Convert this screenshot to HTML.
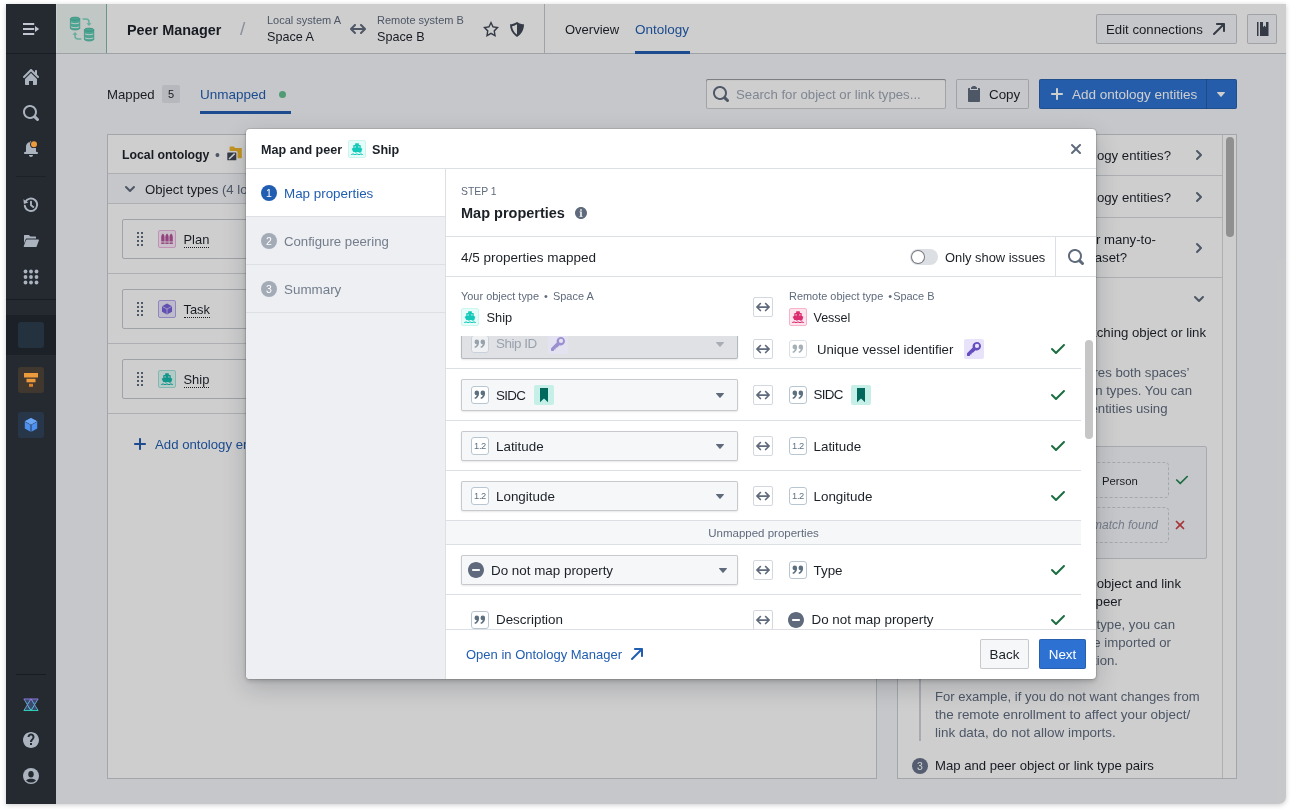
<!DOCTYPE html>
<html lang="en">
<head>
<meta charset="utf-8">
<title>Peer Manager</title>
<style>
*{box-sizing:border-box;margin:0;padding:0}
html,body{width:1293px;height:812px;background:#fff;overflow:hidden}
body{font-family:"Liberation Sans",sans-serif;font-size:13.2px;color:#1c2127;line-height:18px;position:relative}
svg{display:block}
.abs{position:absolute;white-space:nowrap}
.muted{color:#5f6b7c}
.blue{color:#215db0}
.b{font-weight:700}
#shadow{position:absolute;left:6px;top:4px;width:1280px;height:800px;border-radius:0 0 7px 0;box-shadow:0 1px 5px rgba(0,0,0,.2)}
#frame{will-change:transform;position:absolute;left:0;top:0;width:1293px;height:812px;overflow:hidden;clip-path:inset(4px 7px 8px 6px round 0 0 7px 0)}
#sidebar{position:absolute;left:6px;top:4px;width:50px;height:800px;background:#252a31}
#topbar{position:absolute;left:56px;top:4px;width:1230px;height:50px;background:#fff;border-bottom:1px solid #c5c8cc}
#content{position:absolute;left:56px;top:54px;width:1230px;height:750px;background:#f6f7f9}
#overlay{position:absolute;left:56px;top:4px;width:1230px;height:800px;background:rgba(10,12,15,.2)}
#modal{will-change:transform;position:absolute;left:246px;top:129px;width:850px;height:550px;background:#fff;border-radius:4px;box-shadow:0 0 0 1px rgba(17,20,24,.1),0 2px 4px rgba(17,20,24,.2),0 8px 24px rgba(17,20,24,.2);overflow:hidden}
.btn{position:absolute;height:30px;border:1px solid rgba(17,20,24,.2);background:#f6f7f9;border-radius:2px;white-space:nowrap}
.panel{position:absolute;background:#fff;border:1px solid #c9ccd0}
.hline{position:absolute;height:1px;background:#dcdee1}
.vline{position:absolute;width:1px;background:#dcdee1}
.tbox{position:absolute;width:18px;height:18px;border-radius:2px}

</style>
</head>
<body>
<div id="shadow"></div>
<div id="frame">
<div id="sidebar"></div>
<div id="topbar"></div>
<div id="content"></div>
<div class="abs" style="left:23px;top:21px;"><svg width="17" height="16" viewBox="0 0 17 16" style=""><g fill="#c0c6d0"><rect x="0" y="2" width="11.200" height="2"/><rect x="0" y="7" width="11.200" height="2"/><rect x="0" y="12" width="11.200" height="2"/><path d="M12 5l4.200 3-4.200 3z"/></g></svg></div>
<div class="abs" style="left:6px;top:53px;width:50px;height:1px;background:#1a1e24"></div>
<div class="abs" style="left:23.0px;top:69.0px;"><svg width="16" height="16" viewBox="0 0 16 16" style="" ><path fill="#abb3bf" fill-rule="evenodd" d="M2 10v5c0 .55.45 1 1 1h3v-4h4v4h3c.55 0 1-.45 1-1v-5L8 4l-6 6zm13.71-2.71L14 5.59V2c0-.55-.45-1-1-1s-1 .45-1 1v1.59L8.71.29C8.53.11 8.28 0 8 0s-.53.11-.71.29l-7 7a1.003 1.003 0 001.42 1.42L8 2.41l6.29 6.29a1.003 1.003 0 001.42-1.42z"/></svg></div>
<div class="abs" style="left:23.0px;top:105.0px;"><svg width="16" height="16" viewBox="0 0 16 16" style="" ><path fill="#abb3bf" fill-rule="evenodd" d="M15.55 13.43l-2.67-2.68a6.94 6.94 0 001.11-3.76c0-3.87-3.13-7-7-7s-7 3.13-7 7 3.13 7 7 7c1.39 0 2.68-.42 3.76-1.11l2.68 2.67a1.498 1.498 0 102.12-2.12zm-8.56-1.44c-2.76 0-5-2.24-5-5s2.24-5 5-5 5 2.24 5 5-2.24 5-5 5z"/></svg></div>
<div class="abs" style="left:23px;top:141px;"><svg width="16" height="16" viewBox="0 0 16 16" style=""><path fill="#abb3bf" d="M8 16c1.100 0 2-.9 2-2H6c0 1.100.9 2 2 2zm6-5c-.55 0-1-.45-1-1V6c0-2.430-1.730-4.450-4.020-4.900.010-.4.020-.7.020-.1 0-.55-.45-1-1-1s-1 .45-1 1c0 .3.010.6.020.1A4.992 4.992 0 003 6v4c0 .55-.45 1-1 1s-1 .45-1 1 .45 1 1 1h12c.55 0 1-.45 1-1s-.45-1-1-1z"/><circle cx="11" cy="3.200" r="3.900" fill="#252a31"/><circle cx="11" cy="3.200" r="3" fill="#ec9a3c"/></svg></div>
<div class="abs" style="left:16px;top:176px;width:30px;height:1px;background:#1c2127"></div>
<div class="abs" style="left:23px;top:197px;"><svg width="16" height="16" viewBox="0 0 16 16" style=""><g fill="none" stroke="#abb3bf" stroke-width="1.900" stroke-linecap="round" stroke-linejoin="round"><path d="M2.300 5.200A6.200 6.200 0 1 1 1.800 8.600"/><path d="M8 4.600V8.300l2.300 1.700"/></g><path fill="#abb3bf" d="M.4 2.300l.5 4.600 4.400-1.300z"/></svg></div>
<div class="abs" style="left:23px;top:233px;"><svg width="16" height="16" viewBox="0 0 16 16" style=""><g fill="#abb3bf"><path d="M1 2.500c0-.3.200-.5.500-.5h4.200c.15 0 .3.060.4.170L7.400 3.500h5.100c.3 0 .5.200.5.500v1.500H3.600c-.4 0-.8.250-.95.640L1 10.500z"/><path d="M3.900 6.500h11.600c.35 0 .6.350.47.680l-2.300 6.200c-.14.380-.5.620-.9.620H1.200c-.35 0-.6-.35-.47-.680l2.300-6.200c.14-.380.500-.620.870-.620z"/></g></svg></div>
<div class="abs" style="left:23px;top:269px;"><svg width="16" height="16" viewBox="0 0 16 16" style=""><g fill="#abb3bf"><circle cx="2.5" cy="2.5" r="1.900"/><circle cx="2.5" cy="8.0" r="1.900"/><circle cx="2.5" cy="13.5" r="1.900"/><circle cx="8.0" cy="2.5" r="1.900"/><circle cx="8.0" cy="8.0" r="1.900"/><circle cx="8.0" cy="13.5" r="1.900"/><circle cx="13.5" cy="2.5" r="1.900"/><circle cx="13.5" cy="8.0" r="1.900"/><circle cx="13.5" cy="13.5" r="1.900"/></g></svg></div>
<div class="abs" style="left:6px;top:299px;width:50px;height:1px;background:#1a1e24"></div>
<div class="abs" style="left:6px;top:315px;width:50px;height:40px;background:#1c2127"></div>
<div class="abs" style="left:18px;top:322px;width:26px;height:26px;border-radius:3px;background:#24313f"></div>
<div class="abs" style="left:18px;top:367px;width:26px;height:26px;border-radius:3px;background:#40382f"><svg width="26" height="26" viewBox="0 0 26 26" style=""><rect x="6" y="6" width="14" height="4.500" fill="#ec9a3c"/><rect x="8.500" y="11.800" width="9" height="3.500" fill="#ec9a3c"/><rect x="11" y="16.800" width="4" height="3" fill="#d9822b"/></svg></div>
<div class="abs" style="left:18px;top:412px;width:26px;height:26px;border-radius:3px;background:#28364a"><svg width="26" height="26" viewBox="0 0 26 26" style=""><path d="M13 6l6.200 3.300v7.200L13 20l-6.200-3.500V9.300z" fill="#4c90f0"/><path d="M13 12.700l6.200-3.400M13 12.700L6.800 9.300M13 12.700V20" stroke="#28364a" stroke-width="1" fill="none"/><path d="M13 6l6.200 3.300L13 12.700 6.800 9.300z" fill="#6aa5f5"/></svg></div>
<div class="abs" style="left:16px;top:674px;width:30px;height:1px;background:#181b20"></div>
<div class="abs" style="left:23px;top:698px;"><svg width="16" height="13.5" viewBox="0 0 18 15" style=""><defs><linearGradient id="xg" x1="0" y1="0" x2="0" y2="1"><stop offset="0" stop-color="#9b7bf0"/><stop offset="1" stop-color="#2ee0c8"/></linearGradient></defs><g fill="#3b4a6b" stroke="url(#xg)" stroke-width="1" stroke-linejoin="round"><path d="M1 1h8L5 7.500z"/><path d="M9 1h8l-4 6.500z"/><path d="M1 14h8L5 7.500z"/><path d="M9 14h8l-4-6.500z"/><path d="M5 7.500L9 1l4 6.500L9 14z"/></g></svg></div>
<div class="abs" style="left:23.0px;top:732.0px;"><svg width="16" height="16" viewBox="0 0 16 16" style="" ><path fill="#abb3bf" fill-rule="evenodd" d="M8 0C3.58 0 0 3.58 0 8s3.58 8 8 8 8-3.58 8-8-3.58-8-8-8zM7 13v-2h2v2H7zm2-3H7c0-3 2.5-3 2.5-5 0-.83-.67-1.5-1.5-1.5S6.500 4.170 6.500 5h-2c0-1.930 1.570-3.500 3.500-3.500S11.500 3.070 11.500 5c0 2.500-2.500 3-2.500 5z"/></svg></div>
<div class="abs" style="left:23px;top:768px;"><svg width="16" height="16" viewBox="0 0 16 16" style=""><defs><clipPath id="uc"><circle cx="8" cy="8" r="6.600"/></clipPath></defs><circle cx="8" cy="8" r="8" fill="#abb3bf"/><g clip-path="url(#uc)" fill="#252a31"><ellipse cx="8" cy="6.300" rx="2.700" ry="3.200"/><path d="M2 15c0-2.500 2-3.600 4.500-4.200h3c2.500.6 4.500 1.700 4.500 4.200z"/></g></svg></div>
<div class="abs" style="left:57px;top:4px;width:50px;height:49px;background:#eef7f2;border-right:1px solid #82baaa"></div>
<div class="abs" style="left:68px;top:14px;"><svg width="30" height="30" viewBox="0 0 30 30" style=""><g transform="translate(2.4,2.9)"><path d="M0 1.800v9.600c0 1 2.100 1.700 4.700 1.700s4.700-.7 4.700-1.700V1.800z" fill="#5ecdb5"/><path d="M0 4.700c0 1 2.100 1.700 4.700 1.700s4.700-.7 4.700-1.700v1c0 1-2.100 1.700-4.700 1.700S0 6.700 0 5.700z" fill="#e9f5f0"/><path d="M0 8.700c0 1 2.100 1.700 4.700 1.700s4.700-.7 4.700-1.700v1c0 1-2.100 1.700-4.700 1.700S0 10.700 0 9.700z" fill="#e9f5f0"/><path d="M0 1.800v9.600c0 1 2.100 1.700 4.700 1.700s4.700-.7 4.700-1.700V1.800" fill="none" stroke="#35a78d" stroke-width=".6"/><ellipse cx="4.700" cy="1.800" rx="4.700" ry="1.600" fill="#5ecdb5" stroke="#35a78d" stroke-width=".6"/></g><g transform="translate(16.4,13.9)"><path d="M0 1.800v9.600c0 1 2.100 1.700 4.700 1.700s4.700-.7 4.700-1.700V1.800z" fill="#5ecdb5"/><path d="M0 4.700c0 1 2.100 1.700 4.700 1.700s4.700-.7 4.700-1.700v1c0 1-2.100 1.700-4.700 1.700S0 6.700 0 5.700z" fill="#e9f5f0"/><path d="M0 8.700c0 1 2.100 1.700 4.700 1.700s4.700-.7 4.700-1.700v1c0 1-2.100 1.700-4.700 1.700S0 10.700 0 9.700z" fill="#e9f5f0"/><path d="M0 1.800v9.600c0 1 2.100 1.700 4.700 1.700s4.700-.7 4.700-1.700V1.800" fill="none" stroke="#35a78d" stroke-width=".6"/><ellipse cx="4.700" cy="1.800" rx="4.700" ry="1.600" fill="#5ecdb5" stroke="#35a78d" stroke-width=".6"/></g><g fill="none" stroke="#7fd6c2" stroke-width="1.500"><path d="M14.600 5h3.200c2 0 3.200 1.200 3.200 3v2"/><path d="M13.300 25h-3.200c-2 0-3.100-1.200-3.100-3v-2"/></g><path d="M18.400 9.300l2.600 2.800 2.600-2.800z" fill="#7fd6c2"/><path d="M4.400 20.700l2.600-2.800 2.600 2.800z" fill="#7fd6c2"/></svg></div>
<div class="abs" style="left:127px;top:21px;font-weight:700;font-size:14.4px;line-height:18px;color:#1c2127">Peer Manager</div>
<div class="abs" style="left:240px;top:18px;font-size:19px;line-height:22px;color:#abb3bf">/</div>
<div class="abs" style="left:267px;top:13px;font-size:11px;line-height:14px;color:#5f6b7c">Local system A</div>
<div class="abs" style="left:267px;top:28px;font-size:12.600px;line-height:18px">Space A</div>
<div class="abs" style="left:350px;top:21px;"><svg width="16" height="16" viewBox="0 0 16 16" style="" ><path fill="#5f6b7c" fill-rule="evenodd" d="M15.7 7.3l-4-4c-.2-.2-.4-.3-.7-.3-.6 0-1 .5-1 1 0 .3.1.5.3.7L12.6 7H3.4l2.3-2.3c.2-.2.3-.4.3-.7 0-.5-.4-1-1-1-.3 0-.5.1-.7.3l-4 4c-.2.2-.3.4-.3.7s.1.5.3.7l4 4c.2.2.4.3.7.3.6 0 1-.5 1-1 0-.3-.1-.5-.3-.7L3.4 9h9.2l-2.3 2.3c-.2.2-.3.4-.3.7 0 .5.4 1 1 1 .3 0 .5-.1.7-.3l4-4c.2-.2.3-.4.3-.7s-.1-.5-.3-.7z"/></svg></div>
<div class="abs" style="left:377px;top:13px;font-size:11px;line-height:14px;color:#5f6b7c">Remote system B</div>
<div class="abs" style="left:377px;top:28px;font-size:12.600px;line-height:18px">Space B</div>
<div class="abs" style="left:483.0px;top:21.0px;"><svg width="16" height="16" viewBox="0 0 16 16" style="" ><path fill="#404854" fill-rule="evenodd" d="M16 6.11l-5.53-.84L8 0 5.53 5.27 0 6.11l4 4.1L3.06 16 8 13.27 12.94 16 12 10.21l4-4.1zM4.91 13.2l.59-3.62L3 7.02l3.45-.53L8 3.2l1.55 3.29 3.45.53-2.5 2.56.59 3.62L8 11.49 4.91 13.2z"/></svg></div>
<div class="abs" style="left:509px;top:21px;"><svg width="16" height="16" viewBox="0 0 16 16" style=""><path fill="#404854" fill-rule="evenodd" d="M8 16c4.670-3.170 7-7.420 7-12.750-2.430 0-4.430-.750-6.460-2.120a.98.980 0 00-1.080 0C5.430 2.500 3.430 3.250 1 3.250 1 8.580 3.330 12.830 8 16zM3.050 5.140c1.790-.22 3.410-.84 4.950-1.800v10.200c-2.890-2.240-4.500-5-4.950-8.400z"/></svg></div>
<div class="abs" style="left:544px;top:4px;width:1px;height:49px;background:#c5c8cc"></div>
<div class="abs" style="left:565px;top:21px;font-size:13px">Overview</div>
<div class="abs" style="left:635px;top:21px;font-size:13.5px;color:#215db0">Ontology</div>
<div class="abs" style="left:635px;top:51px;width:55px;height:3px;background:#215db0"></div>
<div class="btn" style="left:1096px;top:14px;width:141px"><span class="abs" style="left:9px;top:6px;font-size:13.200px">Edit connections</span><div class="abs" style="left:114px;top:6px;"><svg width="16" height="16" viewBox="0 0 16 16" style="" ><path fill="#404854" fill-rule="evenodd" d="M13 2H6c-.55 0-1 .45-1 1s.45 1 1 1h4.59L2.3 12.29c-.19.18-.3.43-.3.71a1.003 1.003 0 001.71.71L12 5.41V10c0 .55.45 1 1 1s1-.45 1-1V3c0-.55-.45-1-1-1z"/></svg></div></div>
<div class="btn" style="left:1247px;top:14px;width:30px"><div class="abs" style="left:7px;top:6px;"><svg width="16" height="16" viewBox="0 0 16 16" style=""><path fill="#404854" d="M2 1h1.500v14H2zM5 1h3v5.200l1.500-1.700L11 6.200V1h2.500v14H5z"/></svg></div></div>
<div class="abs" style="left:107px;top:86px;font-size:13.2px">Mapped</div>
<div class="abs" style="left:162px;top:85px;width:18px;height:18px;border-radius:2px;background:rgba(143,153,168,.2);font-size:11px;text-align:center;line-height:18px;color:#1c2127">5</div>
<div class="abs" style="left:200px;top:86px;font-size:13.5px;color:#215db0">Unmapped</div>
<div class="abs" style="left:278.5px;top:90.5px;width:7px;height:7px;border-radius:50%;background:#62c08c"></div>
<div class="abs" style="left:200px;top:111px;width:91px;height:3px;background:#215db0"></div>
<div class="abs" style="left:706px;top:79px;width:240px;height:30px;border-radius:2px;background:#fff;box-shadow:inset 0 0 0 1px rgba(17,20,24,.2),inset 0 1px 1px rgba(17,20,24,.3)"></div>
<div class="abs" style="left:713.0px;top:86.0px;"><svg width="16" height="16" viewBox="0 0 16 16" style="" ><path fill="#5f6b7c" fill-rule="evenodd" d="M15.55 13.43l-2.67-2.68a6.94 6.94 0 001.11-3.76c0-3.87-3.13-7-7-7s-7 3.13-7 7 3.13 7 7 7c1.39 0 2.68-.42 3.76-1.11l2.68 2.67a1.498 1.498 0 102.12-2.12zm-8.56-1.44c-2.76 0-5-2.24-5-5s2.24-5 5-5 5 2.24 5 5-2.24 5-5 5z"/></svg></div>
<div class="abs" style="left:736px;top:86px;font-size:13.2px;color:#9ea7b3">Search for object or link types...</div>
<div class="btn" style="left:956px;top:79px;width:73px"><div class="abs" style="left:9px;top:6px;"><svg width="16" height="16" viewBox="0 0 16 16" style=""><path fill="#5f6b7c" d="M11 2c0-.55-.45-1-1-1h.22C9.880.4 9.240 0 8.500 0h-1c-.740 0-1.380.4-1.720 1H6c-.55 0-1 .45-1 1v1h6V2zm2 0h-1v2H4V2H3c-.55 0-1 .45-1 1v12c0 .55.45 1 1 1h10c.55 0 1-.45 1-1V3c0-.55-.45-1-1-1z"/></svg></div><span class="abs" style="left:32px;top:6px;font-size:13.400px">Copy</span></div>
<div class="abs" style="left:1039px;top:79px;width:198px;height:30px;border-radius:2px;background:#2d72d2;box-shadow:inset 0 0 0 1px rgba(17,20,24,.2);color:#fff"><div class="abs" style="left:10px;top:7px;"><svg width="16" height="16" viewBox="0 0 16 16" style="" ><path fill="#fff" fill-rule="evenodd" d="M13 7H9V3c0-.55-.45-1-1-1s-1 .45-1 1v4H3c-.55 0-1 .45-1 1s.45 1 1 1h4v4c0 .55.45 1 1 1s1-.45 1-1V9h4c.55 0 1-.45 1-1s-.45-1-1-1z"/></svg></div><span class="abs" style="left:33px;top:7px;font-size:13.500px">Add ontology entities</span><div class="abs" style="left:167px;top:0;width:1px;height:30px;background:rgba(17,20,24,.25)"></div><div class="abs" style="left:174px;top:7px;"><svg width="16" height="16" viewBox="0 0 16 16" style="" ><path fill="#fff" fill-rule="evenodd" d="M12 6.5c0-.28-.22-.5-.5-.5h-7a.495.495 0 00-.37.83l3.5 4c.09.1.22.17.37.17s.28-.07.37-.17l3.5-4c.08-.09.13-.2.13-.33z"/></svg></div></div>
<div class="panel" style="left:107px;top:134px;width:770px;height:645px"></div>
<div class="abs" style="left:122px;top:146px;font-weight:700;font-size:12.300px;color:#1c2127">Local ontology</div>
<div class="abs" style="left:215px;top:146px;font-size:14px;color:#5f6b7c">•</div>
<div class="abs" style="left:226px;top:146px;"><svg width="16" height="16" viewBox="0 0 16 16" style=""><path d="M3.600 1c0-.3.300-.6.600-.6h3.600l1.300 1.500h6c.4 0 .7.300.7.700v9c0 .4-.3.700-.7.700H3.600z" fill="#f0b726"/><rect x="0" y="5.100" width="11.600" height="10.500" rx="1.600" fill="#fff"/><rect x="1.300" y="6.400" width="9" height="7.900" rx=".6" fill="#404854"/><path d="M3 13l5.700-5.400" stroke="#fff" stroke-width="1.500" fill="none"/></svg></div>
<div class="abs" style="left:108px;top:173px;width:768px;height:1px;background:#d6d9dd"></div>
<div class="abs" style="left:108px;top:174px;width:768px;height:29px;background:#f6f7f9"></div>
<div class="abs" style="left:108px;top:203px;width:768px;height:1px;background:#d6d9dd"></div>
<div class="abs" style="left:122.0px;top:181.0px;"><svg width="16" height="16" viewBox="0 0 16 16" style="" ><path fill="#5f6b7c" fill-rule="evenodd" d="M12 5c-.28 0-.53.11-.71.29L8 8.59l-3.29-3.3a1.003 1.003 0 00-1.42 1.42l4 4c.18.18.43.29.71.29s.53-.11.71-.29l4-4A1.003 1.003 0 0012 5z"/></svg></div>
<div class="abs" style="left:145px;top:181px;font-size:13.2px">Object types <span class="muted">(4 local, 2 remote)</span></div>
<div class="abs" style="left:122px;top:219px;width:740px;height:40px;border:1px solid #c5c8cc;border-radius:2px;background:#fff"></div>
<div class="abs" style="left:137px;top:232px;"><svg width="6" height="14" viewBox="0 0 6 14" style=""><g fill="#5f6b7c"><rect x="0" y="0" width="2" height="2"/><rect x="0" y="4" width="2" height="2"/><rect x="0" y="8" width="2" height="2"/><rect x="0" y="12" width="2" height="2"/><rect x="4" y="0" width="2" height="2"/><rect x="4" y="4" width="2" height="2"/><rect x="4" y="8" width="2" height="2"/><rect x="4" y="12" width="2" height="2"/></g></svg></div>
<div class="abs" style="left:158px;top:230px;width:18px;height:18px;border-radius:2px;background:#fbeef8;border:1px solid #efb5e0;padding:2px"><svg width="12" height="12" viewBox="0 0 16 16" style=""><g fill="#b6539a"><path d="M0.3 11.200V5.500c0-2 .9-3.600 2.200-4.700 1.300 1.100 2.200 2.700 2.200 4.700v5.700z"/><rect x="0.3" y="12.600" width="4.400" height="2"/><path d="M5.8 11.200V5.500c0-2 .9-3.600 2.200-4.700 1.300 1.100 2.200 2.700 2.200 4.700v5.700z"/><rect x="5.8" y="12.600" width="4.400" height="2"/><path d="M11.3 11.200V5.500c0-2 .9-3.600 2.200-4.700 1.300 1.100 2.200 2.700 2.200 4.700v5.700z"/><rect x="11.3" y="12.600" width="4.400" height="2"/></g></svg></div>
<div class="abs" style="left:183.5px;top:231px;font-size:12.900px;border-bottom:1px dotted #1c2127;line-height:17px;height:17px">Plan</div>
<div class="abs" style="left:108px;top:273px;width:768px;height:1px;background:#d6d9dd"></div>
<div class="abs" style="left:122px;top:289px;width:740px;height:40px;border:1px solid #c5c8cc;border-radius:2px;background:#fff"></div>
<div class="abs" style="left:137px;top:302px;"><svg width="6" height="14" viewBox="0 0 6 14" style=""><g fill="#5f6b7c"><rect x="0" y="0" width="2" height="2"/><rect x="0" y="4" width="2" height="2"/><rect x="0" y="8" width="2" height="2"/><rect x="0" y="12" width="2" height="2"/><rect x="4" y="0" width="2" height="2"/><rect x="4" y="4" width="2" height="2"/><rect x="4" y="8" width="2" height="2"/><rect x="4" y="12" width="2" height="2"/></g></svg></div>
<div class="abs" style="left:158px;top:300px;width:18px;height:18px;border-radius:2px;background:#ece8fb;border:1px solid #b6a6ec;padding:2px"><svg width="12" height="12" viewBox="0 0 16 16" style=""><path d="M8 .6l6.700 3.700v7.400L8 15.400 1.300 11.700V4.300z" fill="#7961db"/><path d="M8 8l6.200-3.400M8 8L1.800 4.600M8 8v7" stroke="#fff" stroke-opacity=".7" stroke-width="1.100" fill="none"/></svg></div>
<div class="abs" style="left:183.5px;top:301px;font-size:12.900px;border-bottom:1px dotted #1c2127;line-height:17px;height:17px">Task</div>
<div class="abs" style="left:108px;top:343px;width:768px;height:1px;background:#d6d9dd"></div>
<div class="abs" style="left:122px;top:359px;width:740px;height:40px;border:1px solid #c5c8cc;border-radius:2px;background:#fff"></div>
<div class="abs" style="left:137px;top:372px;"><svg width="6" height="14" viewBox="0 0 6 14" style=""><g fill="#5f6b7c"><rect x="0" y="0" width="2" height="2"/><rect x="0" y="4" width="2" height="2"/><rect x="0" y="8" width="2" height="2"/><rect x="0" y="12" width="2" height="2"/><rect x="4" y="0" width="2" height="2"/><rect x="4" y="4" width="2" height="2"/><rect x="4" y="8" width="2" height="2"/><rect x="4" y="12" width="2" height="2"/></g></svg></div>
<div class="abs" style="left:158px;top:370px;width:18px;height:18px;border-radius:2px;background:#e3fbf7;border:1px solid #9de6db;padding:2px"><svg width="12" height="12" viewBox="1.6 1.500 12.800 12.800" style=""><g fill="#13b9aa"><path d="M6.500 1.800h3c.3 0 .5.200.5.500V3.600h1.300c.4 0 .7.300.7.700v2.500l1.300.5c.3.100.4.400.3.700l-1.100 3.300c-.700.100-1.100.5-1.700.5-.800 0-1.200-.6-2-.6s-1.200.6-2 .6-1.200-.6-2-.6c-.200 0-.400 0-.600.100L2.400 8c-.100-.3 0-.6.300-.7L4 6.800V4.300c0-.4.300-.7.700-.7H6V2.300c0-.3.200-.5.500-.5z"/><path d="M1.800 13.200c.7 0 1.100-.6 2-.6s1.200.6 2.100.6 1.200-.6 2.100-.6 1.200.6 2.100.6 1.200-.6 2.100-.6 1.300.6 2 .6v1.200c-.9 0-1.300-.6-2-.6s-1.200.6-2.100.6-1.200-.6-2.100-.6-1.200.6-2.100.6-1.200-.6-2.100-.6-1.100.6-2 .6z"/></g><g fill="#fff" fill-opacity=".75"><rect x="5.300" y="5" width="1.400" height="1.400"/><rect x="9.300" y="5" width="1.400" height="1.400"/></g></svg></div>
<div class="abs" style="left:183.5px;top:371px;font-size:12.900px;border-bottom:1px dotted #1c2127;line-height:17px;height:17px">Ship</div>
<div class="abs" style="left:108px;top:413px;width:768px;height:1px;background:#d6d9dd"></div>
<div class="abs" style="left:132px;top:436px;"><svg width="16" height="16" viewBox="0 0 16 16" style="" ><path fill="#215db0" fill-rule="evenodd" d="M13 7H9V3c0-.55-.45-1-1-1s-1 .45-1 1v4H3c-.55 0-1 .45-1 1s.45 1 1 1h4v4c0 .55.45 1 1 1s1-.45 1-1V9h4c.55 0 1-.45 1-1s-.45-1-1-1z"/></svg></div>
<div class="abs" style="left:155px;top:436px;font-size:13.200px;color:#215db0">Add ontology entities</div>
<div class="panel" style="left:897px;top:134px;width:340px;height:645px"></div>
<div class="abs" style="left:1222px;top:135px;width:1px;height:643px;background:#d6d9dd"></div>
<div class="abs" style="left:1226px;top:137px;width:8px;height:100px;border-radius:4px;background:#b2b2b2"></div>
<div class="abs " style="right:122px;top:146.5px;font-size:13.2px;line-height:18px">How do I map ontology entities?</div>
<div class="abs" style="left:898px;top:175px;width:324px;height:1px;background:#d6d9dd"></div>
<div class="abs " style="right:122px;top:188.5px;font-size:13.2px;line-height:18px">How do I peer ontology entities?</div>
<div class="abs" style="left:898px;top:217px;width:324px;height:1px;background:#d6d9dd"></div>
<div class="abs " style="right:137px;top:230.5px;font-size:13.2px;line-height:18px">Can I map one-to-many or many-to-</div>
<div class="abs " style="right:166px;top:248.5px;font-size:13.2px;line-height:18px">one with a dataset?</div>
<div class="abs" style="left:898px;top:277px;width:324px;height:1px;background:#d6d9dd"></div>
<div class="abs" style="left:1191.0px;top:147.0px;"><svg width="16" height="16" viewBox="0 0 16 16" style="" ><path fill="#5f6b7c" fill-rule="evenodd" d="M10.71 7.29l-4-4a1.003 1.003 0 00-1.42 1.42L8.59 8 5.3 11.29c-.19.18-.3.43-.3.71a1.003 1.003 0 001.71.71l4-4c.18-.18.29-.43.29-.71 0-.28-.11-.53-.29-.71z"/></svg></div>
<div class="abs" style="left:1191.0px;top:189.0px;"><svg width="16" height="16" viewBox="0 0 16 16" style="" ><path fill="#5f6b7c" fill-rule="evenodd" d="M10.71 7.29l-4-4a1.003 1.003 0 00-1.42 1.42L8.59 8 5.3 11.29c-.19.18-.3.43-.3.71a1.003 1.003 0 001.71.71l4-4c.18-.18.29-.43.29-.71 0-.28-.11-.53-.29-.71z"/></svg></div>
<div class="abs" style="left:1191.0px;top:239.5px;"><svg width="16" height="16" viewBox="0 0 16 16" style="" ><path fill="#5f6b7c" fill-rule="evenodd" d="M10.71 7.29l-4-4a1.003 1.003 0 00-1.42 1.42L8.59 8 5.3 11.29c-.19.18-.3.43-.3.71a1.003 1.003 0 001.71.71l4-4c.18-.18.29-.43.29-.71 0-.28-.11-.53-.29-.71z"/></svg></div>
<div class="abs" style="left:1191.0px;top:291.0px;"><svg width="16" height="16" viewBox="0 0 16 16" style="" ><path fill="#5f6b7c" fill-rule="evenodd" d="M12 5c-.28 0-.53.11-.71.29L8 8.59l-3.29-3.3a1.003 1.003 0 00-1.42 1.42l4 4c.18.18.43.29.71.29s.53-.11.71-.29l4-4A1.003 1.003 0 0012 5z"/></svg></div>
<div class="abs " style="right:87px;top:323.5px;font-size:13.2px;line-height:18px">Find a matching object or link</div>
<div class="abs muted" style="right:103.5px;top:364px;font-size:13.2px;line-height:18px">Peer Manager compares both spaces’</div>
<div class="abs muted" style="right:101px;top:382px;font-size:13.2px;line-height:18px">object, link and action types. You can</div>
<div class="abs muted" style="right:125.5px;top:400px;font-size:13.2px;line-height:18px">filter for unmapped entities using</div>
<div class="abs" style="left:934px;top:446px;width:273px;height:113px;border:1px solid #d0d3d8;border-radius:2px;background:#f6f7f9"></div>
<div class="abs" style="left:948px;top:461.5px;width:221px;height:36px;border:1px dashed #cbcfd5;border-radius:4px"></div>
<div class="abs" style="left:948px;top:507px;width:221px;height:36px;border:1px dashed #cbcfd5;border-radius:4px"></div>
<div class="abs" style="left:1102px;top:472px;font-size:11.300px">Person</div>
<div class="abs"  style="right:135px;top:516px;font-size:12px;line-height:18px;color:#8f99a8"><i>No match found</i></div>
<div class="abs" style="left:1175.0px;top:473.0px;"><svg width="14" height="14" viewBox="0 0 16 16" style="" ><path fill="#238551" fill-rule="evenodd" d="M14 3c-.28 0-.53.11-.71.29L6 10.59l-3.29-3.3a1.003 1.003 0 00-1.42 1.42l4 4c.18.18.43.29.71.29s.53-.11.71-.29l8-8A1.003 1.003 0 0014 3z"/></svg></div>
<div class="abs" style="left:1173.0px;top:518.0px;"><svg width="14" height="14" viewBox="0 0 16 16" style="" ><path fill="#cd4246" fill-rule="evenodd" d="M9.41 8l3.29-3.29c.19-.18.3-.43.3-.71a1.003 1.003 0 00-1.71-.71L8 6.59l-3.29-3.3a1.003 1.003 0 00-1.42 1.42L6.59 8 3.3 11.29c-.19.18-.3.43-.3.71a1.003 1.003 0 001.71.71L8 9.41l3.29 3.29c.18.19.43.3.71.3a1.003 1.003 0 00.71-1.71L9.41 8z"/></svg></div>
<div class="abs " style="right:112px;top:574.5px;font-size:13.2px;line-height:18px">Configure how the object and link</div>
<div class="abs " style="right:171px;top:592.5px;font-size:13.2px;line-height:18px">types should peer</div>
<div class="abs muted" style="right:118px;top:615.5px;font-size:13.2px;line-height:18px">For each object or link type, you can</div>
<div class="abs muted" style="right:122px;top:633.5px;font-size:13.2px;line-height:18px">decide if changes should be imported or</div>
<div class="abs muted" style="right:175px;top:651.5px;font-size:13.2px;line-height:18px">exported in each direction.</div>
<div class="abs" style="left:919px;top:610px;width:2px;height:131px;background:#d0d3d8"></div>
<div class="abs" style="left:935px;top:687.5px;color:#5f6b7c;font-size:13.050px">For example, if you do not want changes from</div>
<div class="abs" style="left:935px;top:705.5px;color:#5f6b7c;font-size:13.450px">the remote enrollment to affect your object/</div>
<div class="abs" style="left:935px;top:723.5px;color:#5f6b7c;font-size:13.450px">link data, do not allow imports.</div>
<div class="abs" style="left:912px;top:757.5px;width:16px;height:16px;border-radius:50%;background:#68748a;color:#fff;font-size:10.500px;line-height:16px;text-align:center">3</div>
<div class="abs" style="left:935px;top:756.5px;font-size:13.130px">Map and peer object or link type pairs</div>
<div id="overlay"></div>
<div id="modal"><div class="abs" style="left:-246px;top:-129px;width:1293px;height:812px"><div class="abs" style="left:261px;top:141px;font-weight:700;font-size:12.600px;line-height:18px">Map and peer</div>
<div class="abs" style="left:348px;top:140px;width:18px;height:18px;border-radius:2px;background:#e6fcf9;border:1px solid #c9f6ef;padding:2px"><svg width="12" height="12" viewBox="1.6 1.500 12.800 12.800" style=""><g fill="#13c9ba"><path d="M6.500 1.800h3c.3 0 .5.200.5.500V3.600h1.300c.4 0 .7.300.7.700v2.500l1.300.5c.3.100.4.400.3.700l-1.100 3.300c-.700.100-1.100.5-1.700.5-.800 0-1.200-.6-2-.6s-1.200.6-2 .6-1.200-.6-2-.6c-.200 0-.400 0-.600.100L2.400 8c-.100-.3 0-.6.300-.7L4 6.800V4.300c0-.4.300-.7.700-.7H6V2.300c0-.3.200-.5.500-.5z"/><path d="M1.800 13.200c.7 0 1.100-.6 2-.6s1.200.6 2.100.6 1.200-.6 2.100-.6 1.200.6 2.100.6 1.200-.6 2.100-.6 1.300.6 2 .6v1.200c-.9 0-1.300-.6-2-.6s-1.200.6-2.100.6-1.200-.6-2.100-.6-1.200.6-2.100.6-1.200-.6-2.100-.6-1.100.6-2 .6z"/></g><g fill="#fff" fill-opacity=".75"><rect x="5.300" y="5" width="1.400" height="1.400"/><rect x="9.300" y="5" width="1.400" height="1.400"/></g></svg></div>
<div class="abs" style="left:372px;top:141px;font-weight:700;font-size:12.600px;line-height:18px">Ship</div>
<div class="abs" style="left:1068.0px;top:141.0px;"><svg width="16" height="16" viewBox="0 0 16 16" style="" ><path fill="#5f6b7c" fill-rule="evenodd" d="M9.41 8l3.29-3.29c.19-.18.3-.43.3-.71a1.003 1.003 0 00-1.71-.71L8 6.59l-3.29-3.3a1.003 1.003 0 00-1.42 1.42L6.59 8 3.3 11.29c-.19.18-.3.43-.3.71a1.003 1.003 0 001.71.71L8 9.41l3.29 3.29c.18.19.43.3.71.3a1.003 1.003 0 00.71-1.71L9.41 8z"/></svg></div>
<div class="abs" style="left:246px;top:168px;width:850px;height:1px;background:#dcdfe3"></div>
<div class="abs" style="left:246px;top:169px;width:199px;height:510px;background:#edeff2"></div>
<div class="abs" style="left:445px;top:169px;width:1px;height:510px;background:#dcdfe3"></div>
<div class="abs" style="left:246px;top:169px;width:199px;height:47px;background:#fff"></div>
<div class="abs" style="left:246px;top:217px;width:199px;height:47px;background:#edeff2"></div>
<div class="abs" style="left:246px;top:265px;width:199px;height:47px;background:#edeff2"></div>
<div class="abs" style="left:246px;top:216px;width:199px;height:1px;background:#dcdfe3"></div>
<div class="abs" style="left:246px;top:264px;width:199px;height:1px;background:#dcdfe3"></div>
<div class="abs" style="left:246px;top:312px;width:199px;height:1px;background:#dcdfe3"></div>
<div class="abs" style="left:261px;top:185px;width:16px;height:16px;border-radius:50%;background:#215db0;color:#fff;font-size:10.500px;line-height:16px;text-align:center">1</div>
<div class="abs" style="left:284px;top:185px;color:#215db0;font-size:13.400px">Map properties</div>
<div class="abs" style="left:261px;top:233px;width:16px;height:16px;border-radius:50%;background:#a3abb6;color:#fff;font-size:10.500px;line-height:16px;text-align:center">2</div>
<div class="abs" style="left:284px;top:233px;color:#737d8c;font-size:13.200px">Configure peering</div>
<div class="abs" style="left:261px;top:281px;width:16px;height:16px;border-radius:50%;background:#a3abb6;color:#fff;font-size:10.500px;line-height:16px;text-align:center">3</div>
<div class="abs" style="left:284px;top:281px;color:#737d8c;font-size:13.400px">Summary</div>
<div class="abs" style="left:461px;top:185px;font-size:10.400px;line-height:14px;color:#5f6b7c">STEP 1</div>
<div class="abs" style="left:461px;top:203px;font-weight:700;font-size:14.500px;line-height:20px">Map properties</div>
<div class="abs" style="left:574.5px;top:206.5px;"><svg width="12" height="12" viewBox="0 0 16 16" style="" ><path fill="#5f6b7c" fill-rule="evenodd" d="M8 0C3.58 0 0 3.58 0 8s3.58 8 8 8 8-3.58 8-8-3.58-8-8-8zM7 3h2v2H7V3zm3 10H6v-1h1V7H6V6h3v6h1v1z"/></svg></div>
<div class="abs" style="left:446px;top:236px;width:650px;height:1px;background:#dcdfe3"></div>
<div class="abs" style="left:461px;top:249px;font-size:13.500px">4/5 properties mapped</div>
<div class="abs" style="left:910px;top:249px;width:28px;height:16px;border-radius:8px;background:#dcdfe4"><div class="abs" style="left:2px;top:2px;width:12px;height:12px;border-radius:50%;background:#fff;box-shadow:0 0 0 1px rgba(17,20,24,.5)"></div></div>
<div class="abs" style="left:945px;top:249px;font-size:12.900px">Only show issues</div>
<div class="abs" style="left:1055px;top:237px;width:1px;height:39px;background:#dcdfe3"></div>
<div class="abs" style="left:1068.0px;top:249.0px;"><svg width="16" height="16" viewBox="0 0 16 16" style="" ><path fill="#5f6b7c" fill-rule="evenodd" d="M15.55 13.43l-2.67-2.68a6.94 6.94 0 001.11-3.76c0-3.87-3.13-7-7-7s-7 3.13-7 7 3.13 7 7 7c1.39 0 2.68-.42 3.76-1.11l2.68 2.67a1.498 1.498 0 102.12-2.12zm-8.56-1.44c-2.76 0-5-2.24-5-5s2.24-5 5-5 5 2.24 5 5-2.24 5-5 5z"/></svg></div>
<div class="abs" style="left:446px;top:276px;width:650px;height:1px;background:#dcdfe3"></div>
<div class="abs" style="left:461px;top:289px;font-size:10.950px;line-height:14px;color:#5f6b7c">Your object type <span style="padding:0 2px">•</span> Space A</div>
<div class="abs" style="left:461px;top:307.5px;width:18px;height:18px;border-radius:2px;background:#e6fcf9;border:1px solid #c9f6ef;padding:2px"><svg width="12" height="12" viewBox="1.6 1.500 12.800 12.800" style=""><g fill="#13c9ba"><path d="M6.500 1.800h3c.3 0 .5.200.5.500V3.600h1.300c.4 0 .7.300.7.700v2.500l1.300.5c.3.100.4.400.3.700l-1.100 3.300c-.700.100-1.100.5-1.700.5-.800 0-1.200-.6-2-.6s-1.200.6-2 .6-1.200-.6-2-.6c-.200 0-.400 0-.600.100L2.400 8c-.100-.3 0-.6.300-.7L4 6.800V4.300c0-.4.300-.7.700-.7H6V2.300c0-.3.200-.5.500-.5z"/><path d="M1.800 13.200c.7 0 1.100-.6 2-.6s1.200.6 2.100.6 1.200-.6 2.100-.6 1.200.6 2.100.6 1.200-.6 2.100-.6 1.300.6 2 .6v1.200c-.9 0-1.300-.6-2-.6s-1.200.6-2.100.6-1.200-.6-2.100-.6-1.200.6-2.100.6-1.200-.6-2.100-.6-1.100.6-2 .6z"/></g><g fill="#fff" fill-opacity=".75"><rect x="5.300" y="5" width="1.400" height="1.400"/><rect x="9.300" y="5" width="1.400" height="1.400"/></g></svg></div>
<div class="abs" style="left:486.5px;top:308.5px;font-size:12.800px">Ship</div>
<div class="abs" style="left:753px;top:297px;width:20px;height:20px;border:1px solid #d3d8de;border-radius:2px;background:#fff"><div class="abs" style="left:2px;top:2px;"><svg width="14" height="14" viewBox="0 0 16 16" style="" ><path fill="#5f6b7c" fill-rule="evenodd" d="M15.7 7.3l-4-4c-.2-.2-.4-.3-.7-.3-.6 0-1 .5-1 1 0 .3.1.5.3.7L12.6 7H3.4l2.3-2.3c.2-.2.3-.4.3-.7 0-.5-.4-1-1-1-.3 0-.5.1-.7.3l-4 4c-.2.2-.3.4-.3.7s.1.5.3.7l4 4c.2.2.4.3.7.3.6 0 1-.5 1-1 0-.3-.1-.5-.3-.7L3.4 9h9.2l-2.3 2.3c-.2.2-.3.4-.3.7 0 .5.4 1 1 1 .3 0 .5-.1.7-.3l4-4c.2-.2.3-.4.3-.7s-.1-.5-.3-.7z"/></svg></div></div>
<div class="abs" style="left:789px;top:289px;font-size:10.950px;line-height:14px;color:#5f6b7c">Remote object type <span style="padding:0 1px 0 2px">•</span>Space B</div>
<div class="abs" style="left:789px;top:307.5px;width:18px;height:18px;border-radius:2px;background:#fde3ec;border:1px solid #f7b3cb;padding:2px"><svg width="12" height="12" viewBox="1.6 1.500 12.800 12.800" style=""><g fill="#db2c6f"><path d="M6.500 1.800h3c.3 0 .5.200.5.500V3.600h1.300c.4 0 .7.300.7.700v2.500l1.300.5c.3.100.4.400.3.700l-1.100 3.300c-.700.100-1.100.5-1.700.5-.800 0-1.200-.6-2-.6s-1.200.6-2 .6-1.200-.6-2-.6c-.200 0-.400 0-.600.100L2.400 8c-.100-.3 0-.6.300-.7L4 6.800V4.300c0-.4.300-.7.700-.7H6V2.300c0-.3.200-.5.500-.5z"/><path d="M1.800 13.200c.7 0 1.100-.6 2-.6s1.200.6 2.100.6 1.200-.6 2.100-.6 1.200.6 2.100.6 1.200-.6 2.100-.6 1.300.6 2 .6v1.200c-.9 0-1.300-.6-2-.6s-1.200.6-2.100.6-1.200-.6-2.100-.6-1.200.6-2.100.6-1.200-.6-2.100-.6-1.100.6-2 .6z"/></g><g fill="#fff" fill-opacity=".75"><rect x="5.300" y="5" width="1.400" height="1.400"/><rect x="9.300" y="5" width="1.400" height="1.400"/></g></svg></div>
<div class="abs" style="left:813.5px;top:308.5px;font-size:12.500px">Vessel</div>
<div class="abs" style="left:446px;top:336px;width:650px;height:293px;overflow:hidden"><div class="abs" style="left:-446px;top:-336px;width:1293px;height:812px"><div class="abs" style="left:461px;top:328px;width:277px;height:31px;border-radius:2px;background:#dfe1e5;box-shadow:inset 0 0 0 1px rgba(17,20,24,.2),0 1px 2px rgba(17,20,24,.1)"></div><div class="abs" style="left:471px;top:334.5px;width:18px;height:18px;border:1px solid #b8c6d2;border-radius:3px;background:#fff;opacity:.55;"><svg width="16" height="16" viewBox="0 0 16 16" style=""><g fill="#5c7080"><path d="M7.1 5.900c0 3.100-1.500 5.200-4.100 6l-.6-1.200c1.300-.5 2.100-1.300 2.400-2.500a2.300 2.300 0 1 1 2.300-2.300z"/><path d="M13.100000000000001 5.900c0 3.100-1.500 5.200-4.100 6l-.6-1.200c1.300-.5 2.100-1.300 2.400-2.500a2.300 2.300 0 1 1 2.300-2.300z"/></g></svg></div><div class="abs" style="left:496px;top:335.0px;font-size:13.400px;letter-spacing:-.45px;color:#9aa2ae">Ship ID</div><div class="abs" style="left:548px;top:333.5px;width:20px;height:20px;border-radius:2px;background:#e8e3fa;opacity:.55;"><div class="abs" style="left:2.0px;top:2.0px;"><svg width="16" height="16" viewBox="0 0 16 16" style=""><path fill="#634dbf" fill-rule="evenodd" d="M10.800 1a4.200 4.200 0 00-4 5.500L1.300 12c-.2.200-.3.400-.3.700V14.500c0 .3.200.5.500.5H3.500c.300 0 .5-.2.500-.5V13.500h1.200c.3 0 .5-.2.500-.5v-1.200h1c.2 0 .4-.1.500-.2l2.300-2.400A4.200 4.200 0 1010.800 1zm.2 6a2.100 2.100 0 110-4.200 2.100 2.100 0 010 4.200z"/></svg></div></div><div class="abs" style="left:712.0px;top:335.5px;"><svg width="16" height="16" viewBox="0 0 16 16" style="" ><path fill="#a9aeb6" fill-rule="evenodd" d="M12 6.5c0-.28-.22-.5-.5-.5h-7a.495.495 0 00-.37.83l3.5 4c.09.1.22.17.37.17s.28-.07.37-.17l3.5-4c.08-.09.13-.2.13-.33z"/></svg></div><div class="abs" style="left:753px;top:339px;width:20px;height:20px;border:1px solid #d3d8de;border-radius:2px;background:#fff"><div class="abs" style="left:2px;top:2px;"><svg width="14" height="14" viewBox="0 0 16 16" style="" ><path fill="#5f6b7c" fill-rule="evenodd" d="M15.7 7.3l-4-4c-.2-.2-.4-.3-.7-.3-.6 0-1 .5-1 1 0 .3.1.5.3.7L12.6 7H3.4l2.3-2.3c.2-.2.3-.4.3-.7 0-.5-.4-1-1-1-.3 0-.5.1-.7.3l-4 4c-.2.2-.3.4-.3.7s.1.5.3.7l4 4c.2.2.4.3.7.3.6 0 1-.5 1-1 0-.3-.1-.5-.3-.7L3.4 9h9.2l-2.3 2.3c-.2.2-.3.4-.3.7 0 .5.4 1 1 1 .3 0 .5-.1.7-.3l4-4c.2-.2.3-.4.3-.7s-.1-.5-.3-.7z"/></svg></div></div><div class="abs" style="left:789px;top:340px;width:18px;height:18px;border:1px solid #b8c6d2;border-radius:3px;background:#fff;opacity:.55;"><svg width="16" height="16" viewBox="0 0 16 16" style=""><g fill="#5c7080"><path d="M7.1 5.900c0 3.100-1.500 5.200-4.100 6l-.6-1.200c1.300-.5 2.100-1.300 2.400-2.500a2.300 2.300 0 1 1 2.300-2.300z"/><path d="M13.100000000000001 5.900c0 3.100-1.500 5.200-4.100 6l-.6-1.200c1.300-.5 2.100-1.300 2.400-2.500a2.300 2.300 0 1 1 2.300-2.300z"/></g></svg></div><div class="abs" style="left:817px;top:340.5px;font-size:13.200px">Unique vessel identifier</div><div class="abs" style="left:964px;top:339.0px;width:20px;height:20px;border-radius:2px;background:#e8e3fa;"><div class="abs" style="left:2.0px;top:2.0px;"><svg width="16" height="16" viewBox="0 0 16 16" style=""><path fill="#634dbf" fill-rule="evenodd" d="M10.800 1a4.200 4.200 0 00-4 5.500L1.300 12c-.2.200-.3.400-.3.700V14.500c0 .3.200.5.500.5H3.500c.300 0 .5-.2.500-.5V13.500h1.200c.3 0 .5-.2.500-.5v-1.200h1c.2 0 .4-.1.500-.2l2.300-2.400A4.200 4.200 0 1010.800 1zm.2 6a2.100 2.100 0 110-4.200 2.100 2.100 0 010 4.200z"/></svg></div></div><div class="abs" style="left:1050.0px;top:341.0px;"><svg width="16" height="16" viewBox="0 0 16 16" style="" ><path fill="#1c6e42" fill-rule="evenodd" d="M14 3c-.28 0-.53.11-.71.29L6 10.59l-3.29-3.3a1.003 1.003 0 00-1.42 1.42l4 4c.18.18.43.29.71.29s.53-.11.71-.29l8-8A1.003 1.003 0 0014 3z"/></svg></div><div class="abs" style="left:446px;top:368px;width:635px;height:1px;background:#dcdfe3"></div><div class="abs" style="left:461px;top:379px;width:277px;height:32px;border-radius:2px;background:#f6f7f9;box-shadow:inset 0 0 0 1px rgba(17,20,24,.2),0 1px 2px rgba(17,20,24,.1)"></div><div class="abs" style="left:471px;top:386.0px;width:18px;height:18px;border:1px solid #b8c6d2;border-radius:3px;background:#fff;"><svg width="16" height="16" viewBox="0 0 16 16" style=""><g fill="#5c7080"><path d="M7.1 5.900c0 3.100-1.500 5.200-4.100 6l-.6-1.200c1.300-.5 2.100-1.300 2.400-2.500a2.300 2.300 0 1 1 2.300-2.300z"/><path d="M13.100000000000001 5.900c0 3.100-1.500 5.200-4.100 6l-.6-1.200c1.300-.5 2.100-1.300 2.400-2.500a2.300 2.300 0 1 1 2.300-2.300z"/></g></svg></div><div class="abs" style="left:496px;top:386.5px;font-size:13.400px;letter-spacing:-.7px;color:#1c2127">SIDC</div><div class="abs" style="left:534px;top:385.0px;width:20px;height:20px;border-radius:2px;background:#c6efe8;"><div class="abs" style="left:2.0px;top:2.0px;"><svg width="16" height="16" viewBox="0 0 16 16" style=""><path fill="#00685c" d="M4 1h8v14.200l-4-3.600-4 3.600z"/></svg></div></div><div class="abs" style="left:712.0px;top:387.0px;"><svg width="16" height="16" viewBox="0 0 16 16" style="" ><path fill="#5f6b7c" fill-rule="evenodd" d="M12 6.5c0-.28-.22-.5-.5-.5h-7a.495.495 0 00-.37.83l3.5 4c.09.1.22.17.37.17s.28-.07.37-.17l3.5-4c.08-.09.13-.2.13-.33z"/></svg></div><div class="abs" style="left:753px;top:384.5px;width:20px;height:20px;border:1px solid #d3d8de;border-radius:2px;background:#fff"><div class="abs" style="left:2px;top:2px;"><svg width="14" height="14" viewBox="0 0 16 16" style="" ><path fill="#5f6b7c" fill-rule="evenodd" d="M15.7 7.3l-4-4c-.2-.2-.4-.3-.7-.3-.6 0-1 .5-1 1 0 .3.1.5.3.7L12.6 7H3.4l2.3-2.3c.2-.2.3-.4.3-.7 0-.5-.4-1-1-1-.3 0-.5.1-.7.3l-4 4c-.2.2-.3.4-.3.7s.1.5.3.7l4 4c.2.2.4.3.7.3.6 0 1-.5 1-1 0-.3-.1-.5-.3-.7L3.4 9h9.2l-2.3 2.3c-.2.2-.3.4-.3.7 0 .5.4 1 1 1 .3 0 .5-.1.7-.3l4-4c.2-.2.3-.4.3-.7s-.1-.5-.3-.7z"/></svg></div></div><div class="abs" style="left:789px;top:385.5px;width:18px;height:18px;border:1px solid #b8c6d2;border-radius:3px;background:#fff;"><svg width="16" height="16" viewBox="0 0 16 16" style=""><g fill="#5c7080"><path d="M7.1 5.900c0 3.100-1.500 5.200-4.100 6l-.6-1.200c1.300-.5 2.100-1.300 2.400-2.500a2.300 2.300 0 1 1 2.300-2.300z"/><path d="M13.100000000000001 5.900c0 3.100-1.500 5.200-4.100 6l-.6-1.200c1.300-.5 2.100-1.300 2.400-2.500a2.300 2.300 0 1 1 2.300-2.300z"/></g></svg></div><div class="abs" style="left:813.5px;top:386px;font-size:13.400px;letter-spacing:-.7px">SIDC</div><div class="abs" style="left:851px;top:384.5px;width:20px;height:20px;border-radius:2px;background:#c6efe8;"><div class="abs" style="left:2.0px;top:2.0px;"><svg width="16" height="16" viewBox="0 0 16 16" style=""><path fill="#00685c" d="M4 1h8v14.200l-4-3.600-4 3.600z"/></svg></div></div><div class="abs" style="left:1050.0px;top:386.5px;"><svg width="16" height="16" viewBox="0 0 16 16" style="" ><path fill="#1c6e42" fill-rule="evenodd" d="M14 3c-.28 0-.53.11-.71.29L6 10.59l-3.29-3.3a1.003 1.003 0 00-1.42 1.42l4 4c.18.18.43.29.71.29s.53-.11.71-.29l8-8A1.003 1.003 0 0014 3z"/></svg></div><div class="abs" style="left:446px;top:420px;width:635px;height:1px;background:#dcdfe3"></div><div class="abs" style="left:461px;top:431px;width:277px;height:30px;border-radius:2px;background:#f6f7f9;box-shadow:inset 0 0 0 1px rgba(17,20,24,.2),0 1px 2px rgba(17,20,24,.1)"></div><div class="abs" style="left:471px;top:437.0px;width:18px;height:18px;border:1px solid #b8c6d2;border-radius:3px;background:#fff;"><span style="position:absolute;left:0;top:0;width:16px;text-align:center;font-size:9.300px;line-height:16px;color:#5c7080;letter-spacing:-.35px">1.2</span></div><div class="abs" style="left:496px;top:437.5px;font-size:13.400px;color:#1c2127">Latitude</div><div class="abs" style="left:712.0px;top:438.0px;"><svg width="16" height="16" viewBox="0 0 16 16" style="" ><path fill="#5f6b7c" fill-rule="evenodd" d="M12 6.5c0-.28-.22-.5-.5-.5h-7a.495.495 0 00-.37.83l3.5 4c.09.1.22.17.37.17s.28-.07.37-.17l3.5-4c.08-.09.13-.2.13-.33z"/></svg></div><div class="abs" style="left:753px;top:436px;width:20px;height:20px;border:1px solid #d3d8de;border-radius:2px;background:#fff"><div class="abs" style="left:2px;top:2px;"><svg width="14" height="14" viewBox="0 0 16 16" style="" ><path fill="#5f6b7c" fill-rule="evenodd" d="M15.7 7.3l-4-4c-.2-.2-.4-.3-.7-.3-.6 0-1 .5-1 1 0 .3.1.5.3.7L12.6 7H3.4l2.3-2.3c.2-.2.3-.4.3-.7 0-.5-.4-1-1-1-.3 0-.5.1-.7.3l-4 4c-.2.2-.3.4-.3.7s.1.5.3.7l4 4c.2.2.4.3.7.3.6 0 1-.5 1-1 0-.3-.1-.5-.3-.7L3.4 9h9.2l-2.3 2.3c-.2.2-.3.4-.3.7 0 .5.4 1 1 1 .3 0 .5-.1.7-.3l4-4c.2-.2.3-.4.3-.7s-.1-.5-.3-.7z"/></svg></div></div><div class="abs" style="left:789px;top:437px;width:18px;height:18px;border:1px solid #b8c6d2;border-radius:3px;background:#fff;"><span style="position:absolute;left:0;top:0;width:16px;text-align:center;font-size:9.300px;line-height:16px;color:#5c7080;letter-spacing:-.35px">1.2</span></div><div class="abs" style="left:813.5px;top:437.5px;font-size:13.400px">Latitude</div><div class="abs" style="left:1050.0px;top:438.0px;"><svg width="16" height="16" viewBox="0 0 16 16" style="" ><path fill="#1c6e42" fill-rule="evenodd" d="M14 3c-.28 0-.53.11-.71.29L6 10.59l-3.29-3.3a1.003 1.003 0 00-1.42 1.42l4 4c.18.18.43.29.71.29s.53-.11.71-.29l8-8A1.003 1.003 0 0014 3z"/></svg></div><div class="abs" style="left:446px;top:470px;width:635px;height:1px;background:#dcdfe3"></div><div class="abs" style="left:461px;top:481px;width:277px;height:30px;border-radius:2px;background:#f6f7f9;box-shadow:inset 0 0 0 1px rgba(17,20,24,.2),0 1px 2px rgba(17,20,24,.1)"></div><div class="abs" style="left:471px;top:487.0px;width:18px;height:18px;border:1px solid #b8c6d2;border-radius:3px;background:#fff;"><span style="position:absolute;left:0;top:0;width:16px;text-align:center;font-size:9.300px;line-height:16px;color:#5c7080;letter-spacing:-.35px">1.2</span></div><div class="abs" style="left:496px;top:487.5px;font-size:13.400px;color:#1c2127">Longitude</div><div class="abs" style="left:712.0px;top:488.0px;"><svg width="16" height="16" viewBox="0 0 16 16" style="" ><path fill="#5f6b7c" fill-rule="evenodd" d="M12 6.5c0-.28-.22-.5-.5-.5h-7a.495.495 0 00-.37.83l3.5 4c.09.1.22.17.37.17s.28-.07.37-.17l3.5-4c.08-.09.13-.2.13-.33z"/></svg></div><div class="abs" style="left:753px;top:486px;width:20px;height:20px;border:1px solid #d3d8de;border-radius:2px;background:#fff"><div class="abs" style="left:2px;top:2px;"><svg width="14" height="14" viewBox="0 0 16 16" style="" ><path fill="#5f6b7c" fill-rule="evenodd" d="M15.7 7.3l-4-4c-.2-.2-.4-.3-.7-.3-.6 0-1 .5-1 1 0 .3.1.5.3.7L12.6 7H3.4l2.3-2.3c.2-.2.3-.4.3-.7 0-.5-.4-1-1-1-.3 0-.5.1-.7.3l-4 4c-.2.2-.3.4-.3.7s.1.5.3.7l4 4c.2.2.4.3.7.3.6 0 1-.5 1-1 0-.3-.1-.5-.3-.7L3.4 9h9.2l-2.3 2.3c-.2.2-.3.4-.3.7 0 .5.4 1 1 1 .3 0 .5-.1.7-.3l4-4c.2-.2.3-.4.3-.7s-.1-.5-.3-.7z"/></svg></div></div><div class="abs" style="left:789px;top:487px;width:18px;height:18px;border:1px solid #b8c6d2;border-radius:3px;background:#fff;"><span style="position:absolute;left:0;top:0;width:16px;text-align:center;font-size:9.300px;line-height:16px;color:#5c7080;letter-spacing:-.35px">1.2</span></div><div class="abs" style="left:813.5px;top:487.5px;font-size:13.400px">Longitude</div><div class="abs" style="left:1050.0px;top:488.0px;"><svg width="16" height="16" viewBox="0 0 16 16" style="" ><path fill="#1c6e42" fill-rule="evenodd" d="M14 3c-.28 0-.53.11-.71.29L6 10.59l-3.29-3.3a1.003 1.003 0 00-1.42 1.42l4 4c.18.18.43.29.71.29s.53-.11.71-.29l8-8A1.003 1.003 0 0014 3z"/></svg></div><div class="abs" style="left:446px;top:520px;width:635px;height:1px;background:#dcdfe3"></div><div class="abs" style="left:446px;top:521px;width:635px;height:23px;background:#f6f7f9"></div><div class="abs" style="left:446px;top:524px;width:635px;text-align:center;font-size:11.500px;color:#5f6b7c">Unmapped properties</div><div class="abs" style="left:446px;top:544px;width:635px;height:1px;background:#dcdfe3"></div><div class="abs" style="left:461px;top:555px;width:277px;height:30px;border-radius:2px;background:#f6f7f9;box-shadow:inset 0 0 0 1px rgba(17,20,24,.2),0 1px 2px rgba(17,20,24,.1)"></div><div class="abs" style="left:468.0px;top:562.0px;"><svg width="16" height="16" viewBox="0 0 16 16" style="" ><path fill="#5f6b7c" fill-rule="evenodd" d="M8 0C3.58 0 0 3.58 0 8s3.58 8 8 8 8-3.58 8-8-3.58-8-8-8zm3 9H5c-.55 0-1-.45-1-1s.45-1 1-1h6c.55 0 1 .45 1 1s-.45 1-1 1z"/></svg></div><div class="abs" style="left:491px;top:561.5px;font-size:13.400px;color:#1c2127">Do not map property</div><div class="abs" style="left:715.0px;top:562.0px;"><svg width="16" height="16" viewBox="0 0 16 16" style="" ><path fill="#5f6b7c" fill-rule="evenodd" d="M12 6.5c0-.28-.22-.5-.5-.5h-7a.495.495 0 00-.37.83l3.5 4c.09.1.22.17.37.17s.28-.07.37-.17l3.5-4c.08-.09.13-.2.13-.33z"/></svg></div><div class="abs" style="left:753px;top:560px;width:20px;height:20px;border:1px solid #d3d8de;border-radius:2px;background:#fff"><div class="abs" style="left:2px;top:2px;"><svg width="14" height="14" viewBox="0 0 16 16" style="" ><path fill="#5f6b7c" fill-rule="evenodd" d="M15.7 7.3l-4-4c-.2-.2-.4-.3-.7-.3-.6 0-1 .5-1 1 0 .3.1.5.3.7L12.6 7H3.4l2.3-2.3c.2-.2.3-.4.3-.7 0-.5-.4-1-1-1-.3 0-.5.1-.7.3l-4 4c-.2.2-.3.4-.3.7s.1.5.3.7l4 4c.2.2.4.3.7.3.6 0 1-.5 1-1 0-.3-.1-.5-.3-.7L3.4 9h9.2l-2.3 2.3c-.2.2-.3.4-.3.7 0 .5.4 1 1 1 .3 0 .5-.1.7-.3l4-4c.2-.2.3-.4.3-.7s-.1-.5-.3-.7z"/></svg></div></div><div class="abs" style="left:789px;top:561px;width:18px;height:18px;border:1px solid #b8c6d2;border-radius:3px;background:#fff;"><svg width="16" height="16" viewBox="0 0 16 16" style=""><g fill="#5c7080"><path d="M7.1 5.900c0 3.100-1.500 5.200-4.100 6l-.6-1.200c1.300-.5 2.100-1.300 2.400-2.500a2.300 2.300 0 1 1 2.300-2.300z"/><path d="M13.100000000000001 5.900c0 3.100-1.500 5.200-4.100 6l-.6-1.200c1.300-.5 2.100-1.300 2.400-2.500a2.300 2.300 0 1 1 2.300-2.300z"/></g></svg></div><div class="abs" style="left:813.5px;top:561.5px;font-size:13.400px">Type</div><div class="abs" style="left:1050.0px;top:562.0px;"><svg width="16" height="16" viewBox="0 0 16 16" style="" ><path fill="#1c6e42" fill-rule="evenodd" d="M14 3c-.28 0-.53.11-.71.29L6 10.59l-3.29-3.3a1.003 1.003 0 00-1.42 1.42l4 4c.18.18.43.29.71.29s.53-.11.71-.29l8-8A1.003 1.003 0 0014 3z"/></svg></div><div class="abs" style="left:446px;top:594px;width:635px;height:1px;background:#dcdfe3"></div><div class="abs" style="left:471px;top:610.5px;width:18px;height:18px;border:1px solid #b8c6d2;border-radius:3px;background:#fff;"><svg width="16" height="16" viewBox="0 0 16 16" style=""><g fill="#5c7080"><path d="M7.1 5.900c0 3.100-1.500 5.200-4.100 6l-.6-1.200c1.300-.5 2.100-1.300 2.400-2.500a2.300 2.300 0 1 1 2.300-2.300z"/><path d="M13.100000000000001 5.900c0 3.100-1.500 5.200-4.100 6l-.6-1.200c1.300-.5 2.100-1.300 2.400-2.500a2.300 2.300 0 1 1 2.300-2.300z"/></g></svg></div><div class="abs" style="left:496px;top:611px;font-size:13.400px">Description</div><div class="abs" style="left:753px;top:609.5px;width:20px;height:20px;border:1px solid #d3d8de;border-radius:2px;background:#fff"><div class="abs" style="left:2px;top:2px;"><svg width="14" height="14" viewBox="0 0 16 16" style="" ><path fill="#5f6b7c" fill-rule="evenodd" d="M15.7 7.3l-4-4c-.2-.2-.4-.3-.7-.3-.6 0-1 .5-1 1 0 .3.1.5.3.7L12.6 7H3.4l2.3-2.3c.2-.2.3-.4.3-.7 0-.5-.4-1-1-1-.3 0-.5.1-.7.3l-4 4c-.2.2-.3.4-.3.7s.1.5.3.7l4 4c.2.2.4.3.7.3.6 0 1-.5 1-1 0-.3-.1-.5-.3-.7L3.4 9h9.2l-2.3 2.3c-.2.2-.3.4-.3.7 0 .5.4 1 1 1 .3 0 .5-.1.7-.3l4-4c.2-.2.3-.4.3-.7s-.1-.5-.3-.7z"/></svg></div></div><div class="abs" style="left:788.0px;top:611.5px;"><svg width="16" height="16" viewBox="0 0 16 16" style="" ><path fill="#5f6b7c" fill-rule="evenodd" d="M8 0C3.58 0 0 3.58 0 8s3.58 8 8 8 8-3.58 8-8-3.58-8-8-8zm3 9H5c-.55 0-1-.45-1-1s.45-1 1-1h6c.55 0 1 .45 1 1s-.45 1-1 1z"/></svg></div><div class="abs" style="left:811.5px;top:611px;font-size:13.400px">Do not map property</div><div class="abs" style="left:1050.0px;top:611.5px;"><svg width="16" height="16" viewBox="0 0 16 16" style="" ><path fill="#1c6e42" fill-rule="evenodd" d="M14 3c-.28 0-.53.11-.71.29L6 10.59l-3.29-3.3a1.003 1.003 0 00-1.42 1.42l4 4c.18.18.43.29.71.29s.53-.11.71-.29l8-8A1.003 1.003 0 0014 3z"/></svg></div><div class="abs" style="left:1085px;top:340px;width:8px;height:99px;border-radius:4px;background:#c6c6c6"></div></div></div>
<div class="abs" style="left:446px;top:629px;width:650px;height:1px;background:#dcdfe3"></div>
<div class="abs" style="left:466px;top:646px;font-size:13px;color:#215db0">Open in Ontology Manager</div>
<div class="abs" style="left:629px;top:646px;"><svg width="16" height="16" viewBox="0 0 16 16" style="" ><path fill="#215db0" fill-rule="evenodd" d="M13 2H6c-.55 0-1 .45-1 1s.45 1 1 1h4.59L2.3 12.29c-.19.18-.3.43-.3.71a1.003 1.003 0 001.71.71L12 5.41V10c0 .55.45 1 1 1s1-.45 1-1V3c0-.55-.45-1-1-1z"/></svg></div>
<div class="btn" style="left:980px;top:639px;width:49px;text-align:center;line-height:30px;font-size:13.400px">Back</div>
<div class="abs" style="left:1039px;top:639px;width:47px;height:30px;border-radius:2px;background:#2d72d2;box-shadow:inset 0 0 0 1px rgba(17,20,24,.2);color:#fff;text-align:center;line-height:32px;font-size:13.400px">Next</div></div></div>
</div>
</body>
</html>
